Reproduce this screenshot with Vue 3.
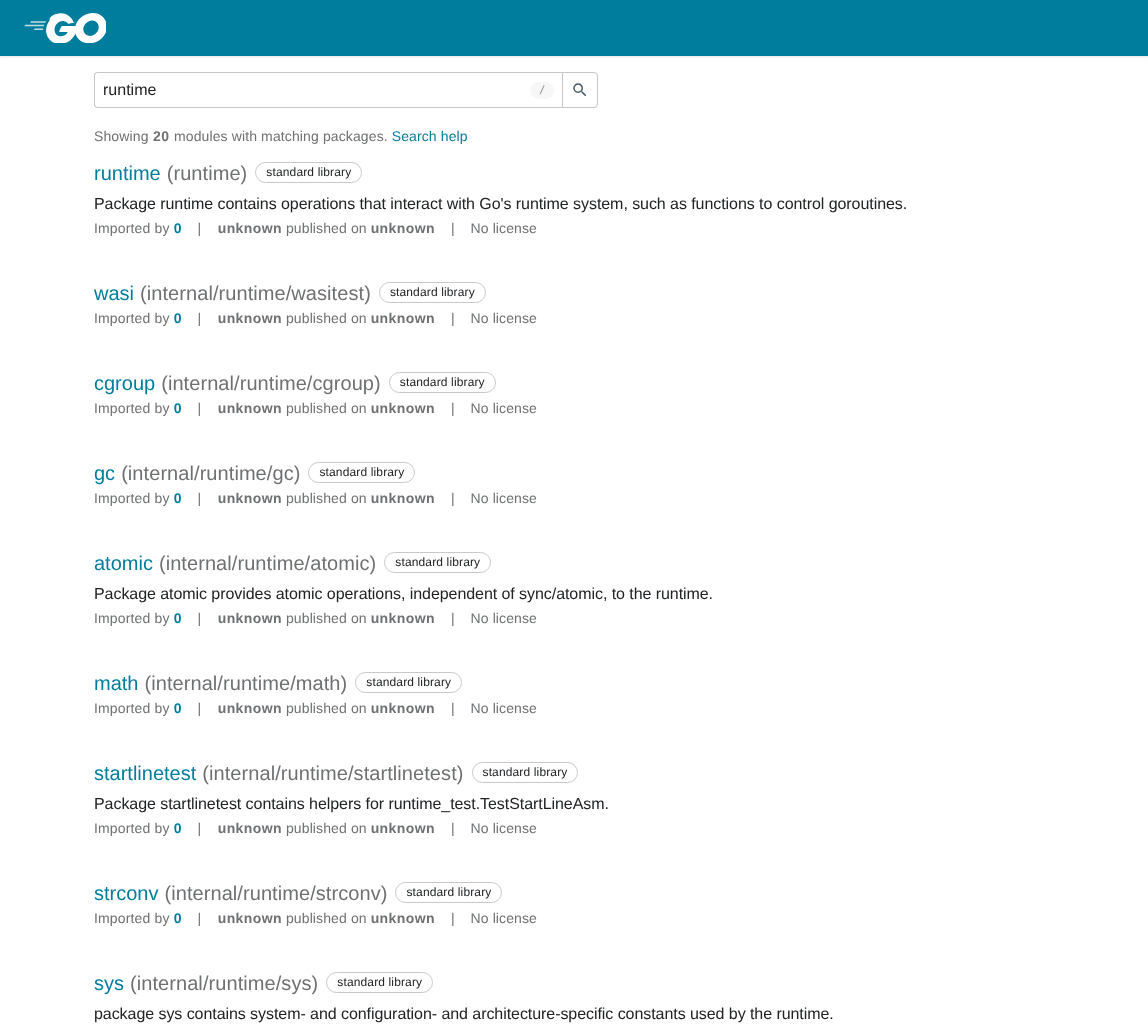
<script setup>
const items = [
  { name: 'runtime', path: 'runtime', synopsis: "Package runtime contains operations that interact with Go's runtime system, such as functions to control goroutines." },
  { name: 'wasi', path: 'internal/runtime/wasitest' },
  { name: 'cgroup', path: 'internal/runtime/cgroup' },
  { name: 'gc', path: 'internal/runtime/gc' },
  { name: 'atomic', path: 'internal/runtime/atomic', synopsis: 'Package atomic provides atomic operations, independent of sync/atomic, to the runtime.' },
  { name: 'math', path: 'internal/runtime/math' },
  { name: 'startlinetest', path: 'internal/runtime/startlinetest', synopsis: 'Package startlinetest contains helpers for runtime_test.TestStartLineAsm.' },
  { name: 'strconv', path: 'internal/runtime/strconv' },
  { name: 'sys', path: 'internal/runtime/sys', synopsis: 'package sys contains system- and configuration- and architecture-specific constants used by the runtime.' },
]
</script>

<template>
  <div class="page">
    <header class="header">
      <svg class="logo" viewBox="0 0 205 77" aria-label="Go">
        <g fill="#fff">
          <path class="speed" d="M16.2 24.1c-.4 0-.5-.2-.3-.5l2.1-2.7c.2-.3.7-.5 1.1-.5h35.7c.4 0 .5.3.3.6l-1.7 2.6c-.2.3-.7.6-1 .6l-36.2-.1z" />
          <path class="speed" d="M1.1 33.3c-.4 0-.5-.2-.3-.5l2.1-2.7c.2-.3.7-.5 1.1-.5h45.6c.4 0 .6.3.5.6l-.8 2.4c-.1.4-.5.6-.9.6l-47.3.1z" />
          <path class="speed" d="M25.3 42.5c-.4 0-.5-.3-.3-.6l1.4-2.5c.2-.3.6-.6 1-.6h20c.4 0 .6.3.6.7l-.2 2.4c0 .4-.4.7-.7.7l-21.8-.1z" />
          <path d="M129.1 22.3c-6.3 1.6-10.6 2.8-16.8 4.4-1.5.4-1.6.5-2.9-1-1.5-1.7-2.6-2.8-4.7-3.8-6.3-3.1-12.4-2.2-18.1 1.5-6.8 4.4-10.3 10.9-10.2 19 .1 8 5.6 14.6 13.5 15.7 6.8.9 12.5-1.5 17-6.6.9-1.1 1.7-2.3 2.7-3.7h-19.3c-2.1 0-2.6-1.3-1.9-3 1.3-3.1 3.7-8.3 5.1-10.9.3-.6 1-1.6 2.5-1.6h36.4c-.2 2.7-.2 5.4-.6 8.1-1.1 7.2-3.8 13.8-8.2 19.6-7.2 9.5-16.6 15.4-28.5 17-9.8 1.3-18.9-.6-26.9-6.6-7.4-5.6-11.6-13-12.7-22.2-1.3-10.9 1.9-20.7 8.5-29.3C62.8 9.6 72.4 3.7 84.2 1.6c9.6-1.7 18.8-.6 27.1 5 5.4 3.6 9.3 8.5 11.9 14.4.6.9.2 1.4-1 1.7z" />
          <path d="M163.1 76.1c-9.1-.2-17.4-2.8-24.4-8.8-5.9-5.1-9.6-11.6-10.8-19.3-1.8-11.3 1.3-21.3 8.1-30.2 7.3-9.6 16.1-14.6 28-16.7 10.2-1.8 19.8-.8 28.5 5.1 7.9 5.4 12.8 12.7 14.1 22.3 1.7 13.5-2.2 24.5-11.5 33.9-6.6 6.7-14.7 10.9-24 12.8-2.7.5-5.4.6-8 .9zm23.8-40.4c-.1-1.3-.1-2.3-.3-3.3-1.8-9.9-10.9-15.5-20.4-13.3-9.3 2.1-15.3 8-17.5 17.4-1.8 7.8 2 15.7 9.2 18.9 5.5 2.4 11 2.1 16.3-.6 7.9-4.1 12.2-10.5 12.7-19.1z" />
        </g>
      </svg>
    </header>

    <main class="main">
      <form class="search" @submit.prevent>
        <div class="input-wrap">
          <input class="input" value="runtime" />
          <span class="key">/</span>
        </div>
        <button class="btn" type="button" aria-label="Search">
          <svg width="18" height="18" viewBox="0 0 24 24" fill="#455a64"><path d="M15.5 14h-.79l-.28-.27A6.471 6.471 0 0 0 16 9.5 6.5 6.5 0 1 0 9.5 16c1.61 0 3.09-.59 4.23-1.57l.27.28v.79l5 4.99L20.49 19l-4.99-5zm-6 0C7.01 14 5 11.99 5 9.5S7.01 5 9.5 5 14 7.01 14 9.5 11.99 14 9.5 14z" /></svg>
        </button>
      </form>

      <p class="summary">Showing <strong>20</strong> modules with matching packages. <a>Search help</a></p>

      <div class="results">
        <article v-for="item in items" :key="item.path" class="item">
          <h2 class="title">
            <a>{{ item.name }}</a>
            <span class="path">({{ item.path }})</span>
            <span class="badge">standard library</span>
          </h2>
          <p v-if="item.synopsis" class="synopsis">{{ item.synopsis }}</p>
          <div class="meta">
            <span class="imported">Imported by <a>0</a></span>
            <span class="sep">|</span>
            <span class="published"><strong>unknown</strong> published on <strong>unknown</strong></span>
            <span class="sep">|</span>
            <span class="license">No license</span>
          </div>
        </article>
      </div>
    </main>
  </div>
</template>

<style>
html, body { margin: 0; background: #fff; }
</style>

<style scoped>
.page {
  height: 100vh;
  overflow: hidden;
  font-family: "Liberation Sans", Arial, sans-serif;
  color: #202224;
  text-rendering: geometricPrecision;
}
.header {
  height: 56px;
  background: #007d9c;
  box-shadow: 0 1px 2px rgba(171, 171, 171, 0.3);
  display: flex;
  align-items: center;
  padding-left: 24px;
}
.logo { width: 82px; height: 30.8px; display: block; }
.speed { opacity: 0.75; }
.main { padding: 16px 94px 0; will-change: transform; }
.search { display: flex; width: 504px; height: 36px; }
.input-wrap {
  flex: 1;
  display: flex;
  align-items: center;
  border: 1px solid #c6c6c6;
  border-right: 0;
  border-radius: 4px 0 0 4px;
  padding: 0 8px;
}
.input {
  flex: 1;
  min-width: 0;
  border: 0;
  outline: 0;
  padding: 2px 0 0;
  background: transparent;
  font: 16px "Liberation Sans", Arial, sans-serif;
  color: #202224;
  text-rendering: geometricPrecision;
}
.key {
  width: 24px;
  height: 17px;
  line-height: 17px;
  border-radius: 9px;
  background: #f7f7f7;
  color: #8a8a8a;
  font-size: 12px;
  font-style: italic;
  text-align: center;
}
.btn {
  width: 36px;
  border: 1px solid #c6c6c6;
  border-radius: 0 4px 4px 0;
  background: transparent;
  padding: 0;
  display: flex;
  align-items: center;
  justify-content: center;
}
.summary {
  margin: 20px 0 0;
  font-size: 14px;
  line-height: 16px;
  color: #6e7072;
  letter-spacing: 0.12px;
}
.summary strong { margin: 0 0.5px; letter-spacing: 0.4px; }
.summary a { color: #007d9c; letter-spacing: 0.1px; }
.results { margin-top: 14px; }
.item { height: 90px; }
.item:has(.synopsis) { height: 120px; }
.title {
  margin: 0;
  height: 30px;
  display: flex;
  align-items: center;
  gap: 6px;
  font-size: 20px;
  font-weight: 400;
  white-space: pre;
}
.title a { color: #007d9c; padding-top: 2px; }
.path { color: #6e7072; padding-top: 2px; letter-spacing: 0.07px; }
.badge {
  margin: 0 0 2px 2px;
  height: 19px;
  line-height: 19px;
  padding: 0 10px;
  border: 1px solid #c6c8ca;
  border-radius: 11px;
  font-size: 12px;
  letter-spacing: 0.14px;
  color: #202224;
}
.synopsis {
  margin: 0;
  height: 30px;
  font-size: 16px;
  line-height: 30px;
  padding-top: 2px;
  box-sizing: border-box;
  letter-spacing: -0.062px;
}
.meta {
  display: flex;
  font-size: 14px;
  line-height: 20px;
  color: #6e7072;
}
.meta a { font-weight: 700; color: #007d9c; }
.meta strong { letter-spacing: 0.4px; }
.imported { letter-spacing: 0.15px; }
.published { letter-spacing: 0.11px; }
.license { letter-spacing: 0.1px; }
.sep { margin: 0 16px; }
.imported + .sep { margin-right: 16.5px; }
</style>
